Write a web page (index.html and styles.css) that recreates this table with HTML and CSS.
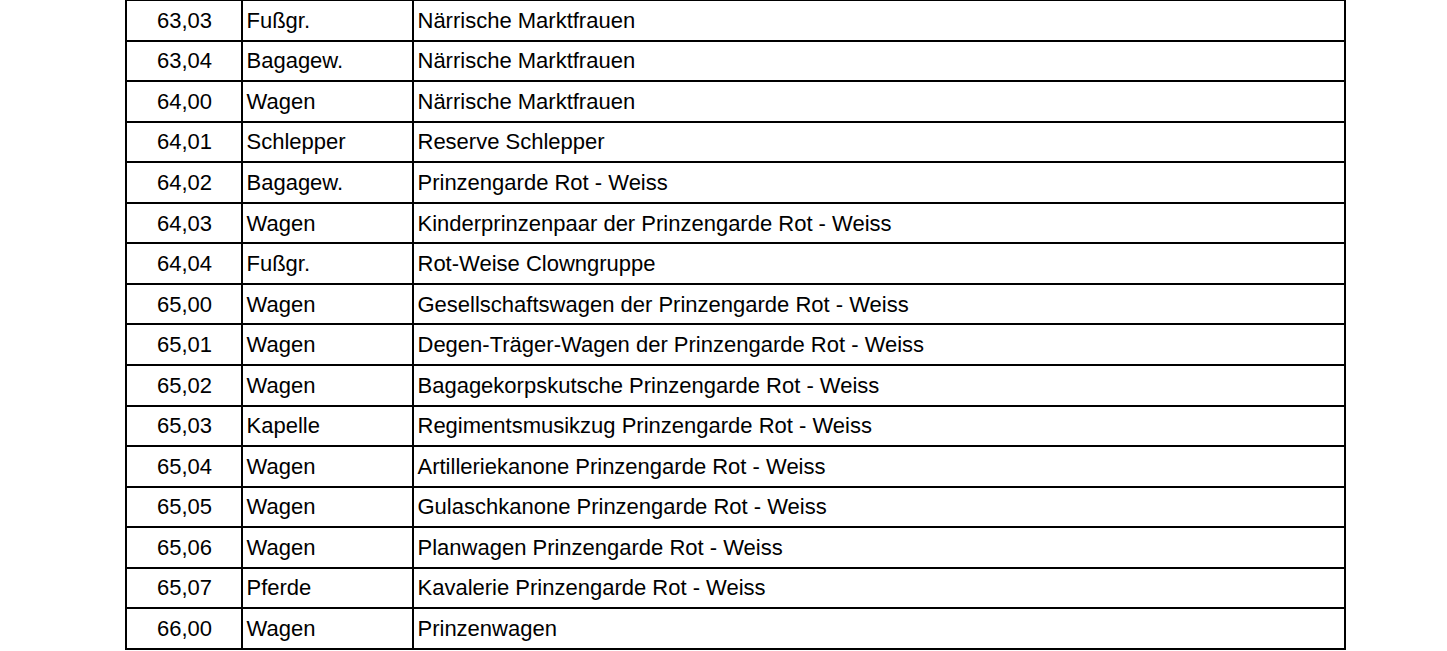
FILE: index.html
```html
<!DOCTYPE html>
<html lang="de">
<head>
<meta charset="utf-8">
<title>Zugaufstellung</title>
<link rel="stylesheet" href="styles.css">
</head>
<body>
<div class="sheet">
  <div class="cell num">63,03</div><div class="cell">Fußgr.</div><div class="cell">Närrische Marktfrauen</div>
  <div class="cell num">63,04</div><div class="cell">Bagagew.</div><div class="cell">Närrische Marktfrauen</div>
  <div class="cell num">64,00</div><div class="cell">Wagen</div><div class="cell">Närrische Marktfrauen</div>
  <div class="cell num">64,01</div><div class="cell">Schlepper</div><div class="cell">Reserve Schlepper</div>
  <div class="cell num">64,02</div><div class="cell">Bagagew.</div><div class="cell">Prinzengarde Rot - Weiss</div>
  <div class="cell num">64,03</div><div class="cell">Wagen</div><div class="cell">Kinderprinzenpaar der Prinzengarde Rot - Weiss</div>
  <div class="cell num">64,04</div><div class="cell">Fußgr.</div><div class="cell">Rot-Weise Clowngruppe</div>
  <div class="cell num">65,00</div><div class="cell">Wagen</div><div class="cell">Gesellschaftswagen der Prinzengarde Rot - Weiss</div>
  <div class="cell num">65,01</div><div class="cell">Wagen</div><div class="cell">Degen-Träger-Wagen der Prinzengarde Rot - Weiss</div>
  <div class="cell num">65,02</div><div class="cell">Wagen</div><div class="cell">Bagagekorpskutsche Prinzengarde Rot - Weiss</div>
  <div class="cell num">65,03</div><div class="cell">Kapelle</div><div class="cell">Regimentsmusikzug Prinzengarde Rot - Weiss</div>
  <div class="cell num">65,04</div><div class="cell">Wagen</div><div class="cell">Artilleriekanone Prinzengarde Rot - Weiss</div>
  <div class="cell num">65,05</div><div class="cell">Wagen</div><div class="cell">Gulaschkanone Prinzengarde Rot - Weiss</div>
  <div class="cell num">65,06</div><div class="cell">Wagen</div><div class="cell">Planwagen Prinzengarde Rot - Weiss</div>
  <div class="cell num">65,07</div><div class="cell">Pferde</div><div class="cell">Kavalerie Prinzengarde Rot - Weiss</div>
  <div class="cell num">66,00</div><div class="cell">Wagen</div><div class="cell">Prinzenwagen</div>
</div>
</body>
</html>
```

FILE: styles.css
```css
html, body {
  margin: 0;
  padding: 0;
  background: #fff;
}

body {
  height: 651px;
  overflow: hidden;
  font-family: "Liberation Sans", Arial, sans-serif;
  font-size: 22px;
  color: #000;
}

.sheet {
  display: grid;
  grid-template-columns: 116px 171px 932px;
  grid-template-rows: 40.6px;
  grid-auto-rows: 40.56px;
  width: max-content;
  margin-left: 124.5px;
  margin-top: -1px;
  border-left: 2px solid #000;
  border-top: 2px solid #000;
}

.cell {
  box-sizing: border-box;
  display: flex;
  align-items: center;
  padding-left: 4px;
  padding-top: 1px;
  border-right: 2px solid #000;
  border-bottom: 2px solid #000;
  white-space: nowrap;
}

.num {
  justify-content: center;
  padding-left: 2px;
}
```
